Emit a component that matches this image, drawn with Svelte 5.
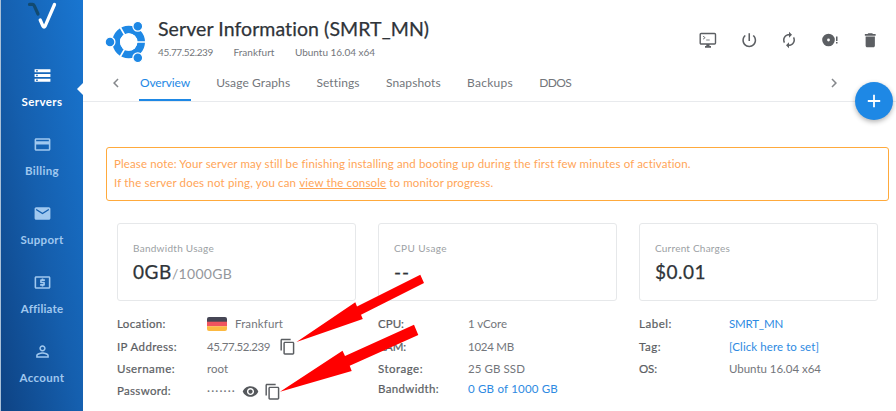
<script>
  // Spreads the letters of a text so that it fills its measure.
  function fit(node, width) {
    const chars = node.textContent.length;
    const natural = node.getBoundingClientRect().width;
    node.style.letterSpacing = `${(width - natural) / chars}px`;
  }

  const icons = {
    servers: 'M2 20h20v-4H2v4zm2-3h2v2H4v-2zM2 4v4h20V4H2zm4 3H4V5h2v2zm-4 7h20v-4H2v4zm2-3h2v2H4v-2z',
    card: 'M20 4H4c-1.11 0-1.99.89-1.99 2L2 18c0 1.11.89 2 2 2h16c1.11 0 2-.89 2-2V6c0-1.11-.89-2-2-2zm0 14H4v-6h16v6zm0-10H4V6h16v2z',
    mail: 'M20 4H4c-1.1 0-1.99.9-1.99 2L2 18c0 1.1.9 2 2 2h16c1.1 0 2-.9 2-2V6c0-1.1-.9-2-2-2zm0 4l-8 5-8-5V6l8 5 8-5v2z',
    cash: 'M11 17h2v-1h1c.55 0 1-.45 1-1v-3c0-.55-.45-1-1-1h-3v-1h4V8h-2V7h-2v1h-1c-.55 0-1 .45-1 1v3c0 .55.45 1 1 1h3v1H9v2h2v1zm9-13H4c-1.11 0-1.99.89-1.99 2L2 18c0 1.11.89 2 2 2h16c1.11 0 2-.89 2-2V6c0-1.11-.89-2-2-2zm0 14H4V6h16v12z',
    person: 'M12 5.9c1.16 0 2.1.94 2.1 2.1s-.94 2.1-2.1 2.1S9.900 9.160 9.900 8s.94-2.100 2.100-2.100m0 9c2.970 0 6.100 1.460 6.100 2.100v1.100H5.900V17c0-.64 3.130-2.100 6.100-2.100M12 4C9.790 4 8 5.790 8 8s1.790 4 4 4 4-1.790 4-4-1.790-4-4-4zm0 9c-2.670 0-8 1.340-8 4v3h16v-3c0-2.660-5.330-4-8-4z',
    power: 'M13 3h-2v10h2V3zm4.83 2.17l-1.42 1.42C17.99 7.86 19 9.81 19 12c0 3.87-3.13 7-7 7s-7-3.13-7-7c0-2.19 1.01-4.14 2.58-5.42L6.17 5.17C4.23 6.82 3 9.26 3 12c0 4.97 4.03 9 9 9s9-4.03 9-9c0-2.74-1.23-5.18-3.17-6.83z',
    restart: 'M12 6v3l4-4-4-4v3c-4.42 0-8 3.58-8 8 0 1.57.46 3.03 1.24 4.26L6.7 14.8c-.45-.83-.7-1.79-.7-2.8 0-3.31 2.69-6 6-6zm6.76 1.74L17.3 9.2c.44.84.7 1.79.7 2.8 0 3.31-2.69 6-6 6v-3l-4 4 4 4v-3c4.42 0 8-3.58 8-8 0-1.57-.46-3.03-1.24-4.26z',
    trash: 'M6 19c0 1.1.9 2 2 2h8c1.1 0 2-.9 2-2V7H6v12zM19 4h-3.5l-1-1h-5l-1 1H5v2h14V4z',
    eye: 'M12 4.5C7 4.500 2.730 7.610 1 12c1.730 4.390 6 7.500 11 7.500s9.270-3.110 11-7.500c-1.730-4.390-6-7.500-11-7.500zM12 17c-2.760 0-5-2.240-5-5s2.240-5 5-5 5 2.240 5 5-2.240 5-5 5zm0-8c-1.660 0-3 1.340-3 3s1.340 3 3 3 3-1.340 3-3-1.340-3-3-3z',
    copy: 'M16 1H4c-1.1 0-2 .9-2 2v14h2V3h12V1zm3 4H8c-1.1 0-2 .9-2 2v14c0 1.1.9 2 2 2h11c1.1 0 2-.9 2-2V7c0-1.1-.9-2-2-2zm0 16H8V7h11v14z',
    left: 'M15.41 16.59L10.83 12l4.58-4.59L14 6l-6 6 6 6z',
    right: 'M8.59 16.59L13.17 12 8.59 7.41 10 6l6 6-6 6z'
  };

  const nav = [
    { label: 'Servers', icon: 'servers', width: 41, active: true },
    { label: 'Billing', icon: 'card', width: 34 },
    { label: 'Support', icon: 'mail', width: 43 },
    { label: 'Affiliate', icon: 'cash', width: 42 },
    { label: 'Account', icon: 'person', width: 45 }
  ];

  const meta = [['45.77.52.239', 55], ['Frankfurt', 41], ['Ubuntu 16.04 x64', 80]];

  const tabs = [
    ['Overview', 50], ['Usage Graphs', 74], ['Settings', 43],
    ['Snapshots', 55], ['Backups', 46], ['DDOS', 32]
  ];

  const cards = [
    { label: 'Bandwidth Usage', lw: 81, value: '0GB', vw: 39, rest: '/1000GB', rw: 60 },
    { label: 'CPU Usage', lw: 53, value: '--', vw: 16 },
    { label: 'Current Charges', lw: 75, value: '$0.01', vw: 51 }
  ];

  const details = [
    [
      { label: 'Location:', lw: 49, value: 'Frankfurt', vw: 48, kind: 'flagged' },
      { label: 'IP Address:', lw: 60, value: '45.77.52.239', vw: 63, kind: 'copyable' },
      { label: 'Username:', lw: 58, value: 'root', vw: 21 },
      { label: 'Password:', lw: 54, value: '·······', vw: 29, kind: 'secret' }
    ],
    [
      { label: 'CPU:', lw: 26, value: '1 vCore', vw: 39 },
      { label: 'RAM:', lw: 28, value: '1024 MB', vw: 46 },
      { label: 'Storage:', lw: 45, value: '25 GB SSD', vw: 57 },
      { label: 'Bandwidth:', lw: 61, value: '0 GB of 1000 GB', vw: 90, kind: 'link tight' }
    ],
    [
      { label: 'Label:', lw: 33, value: 'SMRT_MN', vw: 54, kind: 'link' },
      { label: 'Tag:', lw: 22, value: '[Click here to set]', vw: 90, kind: 'link' },
      { label: 'OS:', lw: 18, value: 'Ubuntu 16.04 x64', vw: 92 }
    ]
  ];
</script>

{#snippet icon(name, size)}
  <svg width={size} height={size} viewBox="0 0 24 24" fill="currentColor"><path d={icons[name]} /></svg>
{/snippet}

<div class="app">
  <aside>
    <svg class="logo" width="34" height="32" viewBox="0 0 34 32" fill="none" stroke-linecap="round" stroke-linejoin="round">
      <path d="M5.500 4.400H8.500Q9.600 4.400 10.200 5.700L14 14" stroke="#124a70" stroke-width="3.200" />
      <path d="M16.200 20L19 26.200Q20 28 21.100 26.200L30.500 4.500" stroke="#fff" stroke-width="3.300" />
    </svg>
    <nav>
      {#each nav as item}
        <a class:active={item.active}>
          {@render icon(item.icon, 19)}
          <span use:fit={item.width}>{item.label}</span>
        </a>
      {/each}
    </nav>
    <i class="notch"></i>
  </aside>

  <main>
    <header>
      <svg class="ubuntu" width="42" height="44" viewBox="0 0 42 44">
        <circle cx="23.700" cy="22" r="12.500" fill="none" stroke="#1e88e5" stroke-width="7.600" />
        <path d="M23.700 22H42M23.700 22L14.200 5.500M23.700 22L14.200 38.500" stroke="#fff" stroke-width="1.600" />
        <circle cx="23.700" cy="22" r="8.700" fill="#fff" />
        <g fill="#1e88e5" stroke="#fff" stroke-width="1.300">
          <circle cx="5" cy="22" r="4.900" />
          <circle cx="32.800" cy="6.300" r="4.900" />
          <circle cx="32.800" cy="37.700" r="4.900" />
        </g>
      </svg>
      <div class="heading">
        <h1><span use:fit={271.5}>Server Information (SMRT_MN)</span></h1>
        <div class="meta">
          {#each meta as [text, width]}<span use:fit={width}>{text}</span>{/each}
        </div>
      </div>
      <div class="tools">
        <svg width="18" height="18" viewBox="0 0 18 18" fill="none" stroke="currentColor">
          <rect x="1.200" y="2.500" width="15.300" height="10.500" rx="1" stroke-width="1.400" />
          <path d="M4 5.200L6.200 6.700L4 8.200M7.200 9H10.700" stroke-width=".8" />
          <path d="M7.300 13H10.500V15H12V16.700H6V15H7.300Z" fill="currentColor" stroke="none" />
        </svg>
        {@render icon('power', 18.5)}
        {@render icon('restart', 18)}
        <svg width="18" height="18" viewBox="0 0 18 18" fill="currentColor">
          <path fill-rule="evenodd" d="M7.500 2.700a6.300 6.300 0 1 0 0 12.600a6.300 6.300 0 1 0 0-12.600zM7.500 7.600a1.400 1.400 0 1 1 0 2.800a1.400 1.400 0 1 1 0-2.800z" />
          <path d="M15 5.500h1.500v4.500H15zM15 11h1.500v1.500H15z" />
        </svg>
        {@render icon('trash', 18.5)}
      </div>
    </header>

    <div class="tabs">
      <span class="chev first">{@render icon('left', 18)}</span>
      {#each tabs as [text, width], i}
        <a class="tab" class:current={i === 0}><span use:fit={width}>{text}</span></a>
      {/each}
      <span class="chev last">{@render icon('right', 18)}</span>
      <button class="fab" aria-label="Deploy">
        <svg width="14" height="14" viewBox="0 0 14 14" stroke="#fff" stroke-width="1.800"><path d="M7 .8V13.200M.8 7H13.200" /></svg>
      </button>
    </div>

    <div class="alert">
      <p><span use:fit={577}>Please note: Your server may still be finishing installing and booting up during the first few minutes of activation.</span></p>
      <p>
        <span use:fit={185}>If the server does not ping, you can&nbsp;</span><u use:fit={87}>view the console</u><span use:fit={107}>&nbsp;to monitor progress.</span>
      </p>
    </div>

    <section class="cards">
      {#each cards as card}
        <div class="card">
          <div class="caption"><span use:fit={card.lw}>{card.label}</span></div>
          <div class="value">
            <span use:fit={card.vw}>{card.value}</span>{#if card.rest}<span class="rest" use:fit={card.rw}>{card.rest}</span>{/if}
          </div>
        </div>
      {/each}
    </section>

    <section class="details">
      {#each details as column}
        <dl>
          {#each column as row}
            <div class="row {row.kind ?? ''}">
              <dt><span use:fit={row.lw}>{row.label}</span></dt>
              <dd>
                {#if row.kind === 'flagged'}
                  <svg class="flag" width="20" height="14" viewBox="0 0 20 14">
                    <path d="M0 5V2Q0 0 2 0H18Q20 0 20 2V5Z" fill="#464655" />
                    <path d="M0 4.700H20V9.300H0Z" fill="#f0545f" />
                    <path d="M0 9.300H20V12Q20 14 18 14H2Q0 14 0 12Z" fill="#fcb941" />
                  </svg>
                {/if}
                <span use:fit={row.vw}>{row.value}</span>
                {#if row.kind === 'secret'}<span class="eye">{@render icon('eye', 17)}</span>{/if}
                {#if row.kind === 'copyable' || row.kind === 'secret'}<span class="copy">{@render icon('copy', 17.5)}</span>{/if}
              </dd>
            </div>
          {/each}
        </dl>
      {/each}
    </section>
  </main>

  <svg class="pointers" width="896" height="411" viewBox="0 0 896 411" fill="#f00">
    <path d="M296.500 342L355.300 302.300L357 306.500L420.300 274.700L424 283L361 314.700L362.800 319Z" />
    <path d="M280 391.700L342.500 350.700L345 356L414 324.700L418.300 335L349.700 365.700L351.700 371Z" />
  </svg>
</div>

<style>
  :global(body) { margin: 0; background: #fff; }
  .app {
    position: relative;
    display: flex;
    width: 896px;
    height: 411px;
    overflow: hidden;
    font-family: Lato, 'Open Sans', sans-serif;
    font-size: 11.5px;
    color: #73767b;
    background: #fff;
  }
  .app span, .app u { white-space: nowrap; }
  svg { display: block; flex: none; }

  aside {
    position: relative;
    box-sizing: border-box;
    flex: none;
    width: 83px;
    border-left: 1px solid #a9c0d8;
    background: linear-gradient(to bottom left, #1976d1 0%, #155fae 52%, #0e4384 100%);
  }
  .logo { margin-left: 23px; }
  nav { display: flex; flex-direction: column; padding-top: 34px; }
  nav a {
    display: flex;
    flex-direction: column;
    align-items: center;
    height: 69px;
    color: #a0c8ef;
    font-weight: 700;
    line-height: 14px;
  }
  nav a.active { color: #fff; }
  nav span { margin-top: 10px; }
  .notch {
    position: absolute;
    right: 0;
    top: 83px;
    border: solid transparent;
    border-width: 6.5px 6.5px 6.5px 0;
    border-right-color: #fff;
  }

  main { flex: 1; min-width: 0; }
  header { display: flex; height: 65px; padding-left: 22px; }
  .ubuntu { margin-top: 19.5px; }
  .heading { margin-left: 11px; padding-top: 17px; }
  h1 {
    margin: 0;
    font-size: 19.5px;
    line-height: 24px;
    font-weight: 400;
    color: #2f3439;
    -webkit-text-stroke: .25px #2f3439;
  }
  .meta { display: flex; gap: 20.5px; margin-top: 4px; font-size: 10px; line-height: 14px; }
  .tools {
    display: flex;
    gap: 22.3px;
    margin: 31px 16.5px 0 auto;
    height: 18px;
    color: #5c5f63;
  }

  .tabs {
    position: relative;
    box-sizing: border-box;
    display: flex;
    height: 37px;
    border-bottom: 1px solid #e8eaed;
    font-size: 12px;
    line-height: 36px;
  }
  .chev { display: flex; align-items: center; color: #85888c; }
  .first { margin-left: 24px; width: 32px; }
  .last { margin-left: auto; margin-right: 53.500px; }
  .tab { box-sizing: border-box; height: 36px; margin-right: 24.200px; padding: 0 1px; }
  .current { color: #1e88e5; border-bottom: 2px solid #1e88e5; }
  .fab {
    position: absolute;
    right: 3px;
    top: 17px;
    display: flex;
    align-items: center;
    justify-content: center;
    width: 38px;
    height: 38px;
    padding: 0;
    border: 0;
    border-radius: 50%;
    background: #1e88e5;
    box-shadow: 0 2px 5px rgba(0, 0, 0, .3);
  }

  .alert {
    box-sizing: border-box;
    height: 54px;
    margin: 45px 7px 0 23px;
    padding: 6px 7px;
    border: 1px solid #ffaa3c;
    border-radius: 3px;
    color: #ffa557;
    line-height: 19px;
  }
  .alert p { margin: 0; white-space: nowrap; }

  .cards, .details { display: grid; grid-template-columns: repeat(3, 239px); column-gap: 22px; margin-left: 34px; }
  .cards { margin-top: 22px; }
  .card {
    box-sizing: border-box;
    height: 78px;
    padding: 16px 15px 0;
    border: 1px solid #e6e8ea;
    border-radius: 3px;
  }
  .caption { font-size: 10px; line-height: 16px; color: #9c9fa4; }
  .value { margin-top: 4px; font-size: 19px; line-height: 24px; color: #2f3439; -webkit-text-stroke: .25px #2f3439; }
  .rest { font-size: 14px; color: #94979c; -webkit-text-stroke: 0; }

  .details { margin-top: 12px; }
  dl { margin: 0; }
  .row { display: flex; align-items: center; height: 22.400px; line-height: 22px; }
  .tight { margin-top: -2px; }
  dt { width: 90px; color: #5b5e63; -webkit-text-stroke: .2px #5b5e63; }
  dd { display: flex; align-items: center; margin: 0; }
  .link dd { color: #2d8ae2; }
  .flag { margin-right: 8px; }
  .copy { margin-left: 8.500px; color: #5a5d61; }
  .secret .copy { margin-left: 5px; }
  .eye { margin-left: 5.500px; color: #55585c; }

  .pointers { position: absolute; left: 0; top: 0; pointer-events: none; }
</style>
